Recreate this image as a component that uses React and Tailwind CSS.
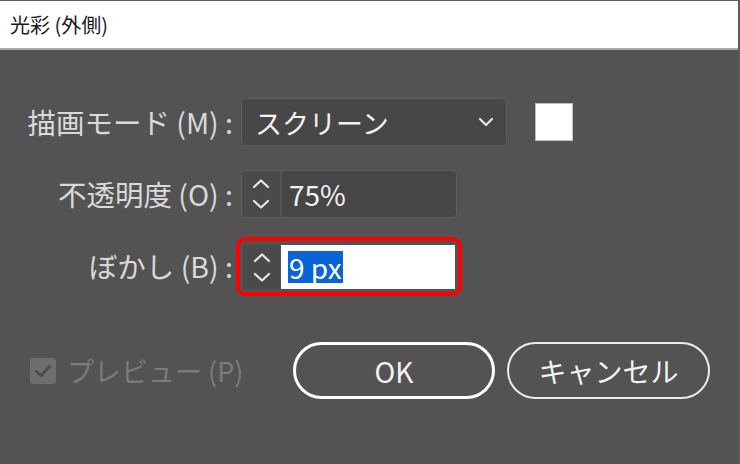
import React from "react";

const F = { fontFamily: '"Noto Sans CJK JP", "Noto Sans", sans-serif' };

function Up() {
  return (
    <svg width="18" height="11" viewBox="0 0 18 11" fill="none">
      <path d="M2 9 L9 2.5 L16 9" stroke="#e8e8e8" strokeWidth="2.2" strokeLinecap="round" strokeLinejoin="round" />
    </svg>
  );
}
function Down() {
  return (
    <svg width="18" height="11" viewBox="0 0 18 11" fill="none">
      <path d="M2 2 L9 8.5 L16 2" stroke="#e8e8e8" strokeWidth="2.2" strokeLinecap="round" strokeLinejoin="round" />
    </svg>
  );
}

export default function App() {
  return (
    <div className="w-[740px] h-[464px] bg-[#535353] flex flex-col border-t border-r-2 border-[#5c5c5c] overflow-hidden" style={F}>
      <div className="h-[49px] shrink-0 bg-white border-b-2 border-[#a9a9a9] pl-[10px] flex items-center text-[20px] text-[#1a1a1a]">
        光彩 (外側)
      </div>
      <div className="flex flex-col pt-[48px]">
        {/* Row 1 */}
        <div className="flex items-center h-[48px]">
          <div className="w-[233px] text-right text-[28.5px] leading-none text-[#d9d9d9] whitespace-nowrap">描画モード (M) :</div>
          <div className="ml-[8px] w-[266px] h-[48px] bg-[#474747] border border-[#5e5e5e] rounded-[5px] flex items-center justify-between pl-[13px] pr-[12px]">
            <span className="text-[27px] text-[#f2f2f2] leading-none">スクリーン</span>
            <svg width="16" height="10" viewBox="0 0 16 10" fill="none">
              <path d="M2 2 L8 8 L14 2" stroke="#e8e8e8" strokeWidth="2.2" strokeLinecap="round" strokeLinejoin="round" />
            </svg>
          </div>
          <div className="ml-[28px] w-[38px] h-[38px] bg-white border border-[#bdbdbd]" />
        </div>
        {/* Row 2 */}
        <div className="flex items-center h-[48px] mt-[24px]">
          <div className="w-[233px] text-right text-[28.5px] leading-none text-[#d9d9d9] whitespace-nowrap">不透明度 (O) :</div>
          <div className="ml-[8px] w-[216px] h-[48px] border border-[#5e5e5e] rounded-[5px] flex overflow-hidden">
            <div className="w-[38px] h-full flex flex-col items-center justify-center gap-[10px] bg-[#4a4a4a]">
              <Up />
              <Down />
            </div>
            <div className="flex-1 ml-[2px] bg-[#464646] flex items-center pl-[7px] text-[28px] leading-none text-[#f2f2f2]">75%</div>
          </div>
        </div>
        {/* Row 3 */}
        <div className="flex items-center h-[59px] mt-[19px]">
          <div className="w-[233px] text-right text-[28.5px] leading-none text-[#d9d9d9] whitespace-nowrap">ぼかし (B) :</div>
          <div className="ml-[3px] w-[226px] h-[59px] border-[4px] border-[#ff0000] rounded-[9px] pt-[4px] pb-[3px] px-[3px] flex">
            <div className="w-[37px] h-full flex flex-col items-center justify-center gap-[9px] bg-[#4a4a4a]">
              <Up />
              <Down />
            </div>
            <div className="flex-1 ml-[1px] bg-white flex items-center pl-[7px]">
              <span className="bg-[#0a64d6] text-white text-[28px] leading-[32px] px-[1px]">9 px</span>
            </div>
          </div>
        </div>
        {/* Bottom */}
        <div className="flex items-center mt-[46px] h-[57px]">
          <div className="w-[293px] pl-[30px] flex items-center">
            <div className="w-[26px] h-[26px] rounded-[3px] bg-[#6e6e6e] flex items-center justify-center">
              <svg width="18" height="14" viewBox="0 0 18 14" fill="none">
                <path d="M2.5 7.5 L7 11.5 L15.5 2.5" stroke="#4b4b4b" strokeWidth="3" strokeLinecap="round" strokeLinejoin="round" />
              </svg>
            </div>
            <div className="ml-[11px] text-[27px] text-[#7b7b7b] leading-none whitespace-nowrap">プレビュー (P)</div>
          </div>
          <div className="w-[202px] h-[57px] rounded-full border-[3px] border-white flex items-center justify-center text-[28px] leading-none text-[#f2f2f2]">OK</div>
          <div className="ml-[12px] w-[203px] h-[57px] rounded-full border-2 border-[#ececec] flex items-center justify-center text-[28px] leading-none text-[#f2f2f2]">キャンセル</div>
        </div>
      </div>
    </div>
  );
}
